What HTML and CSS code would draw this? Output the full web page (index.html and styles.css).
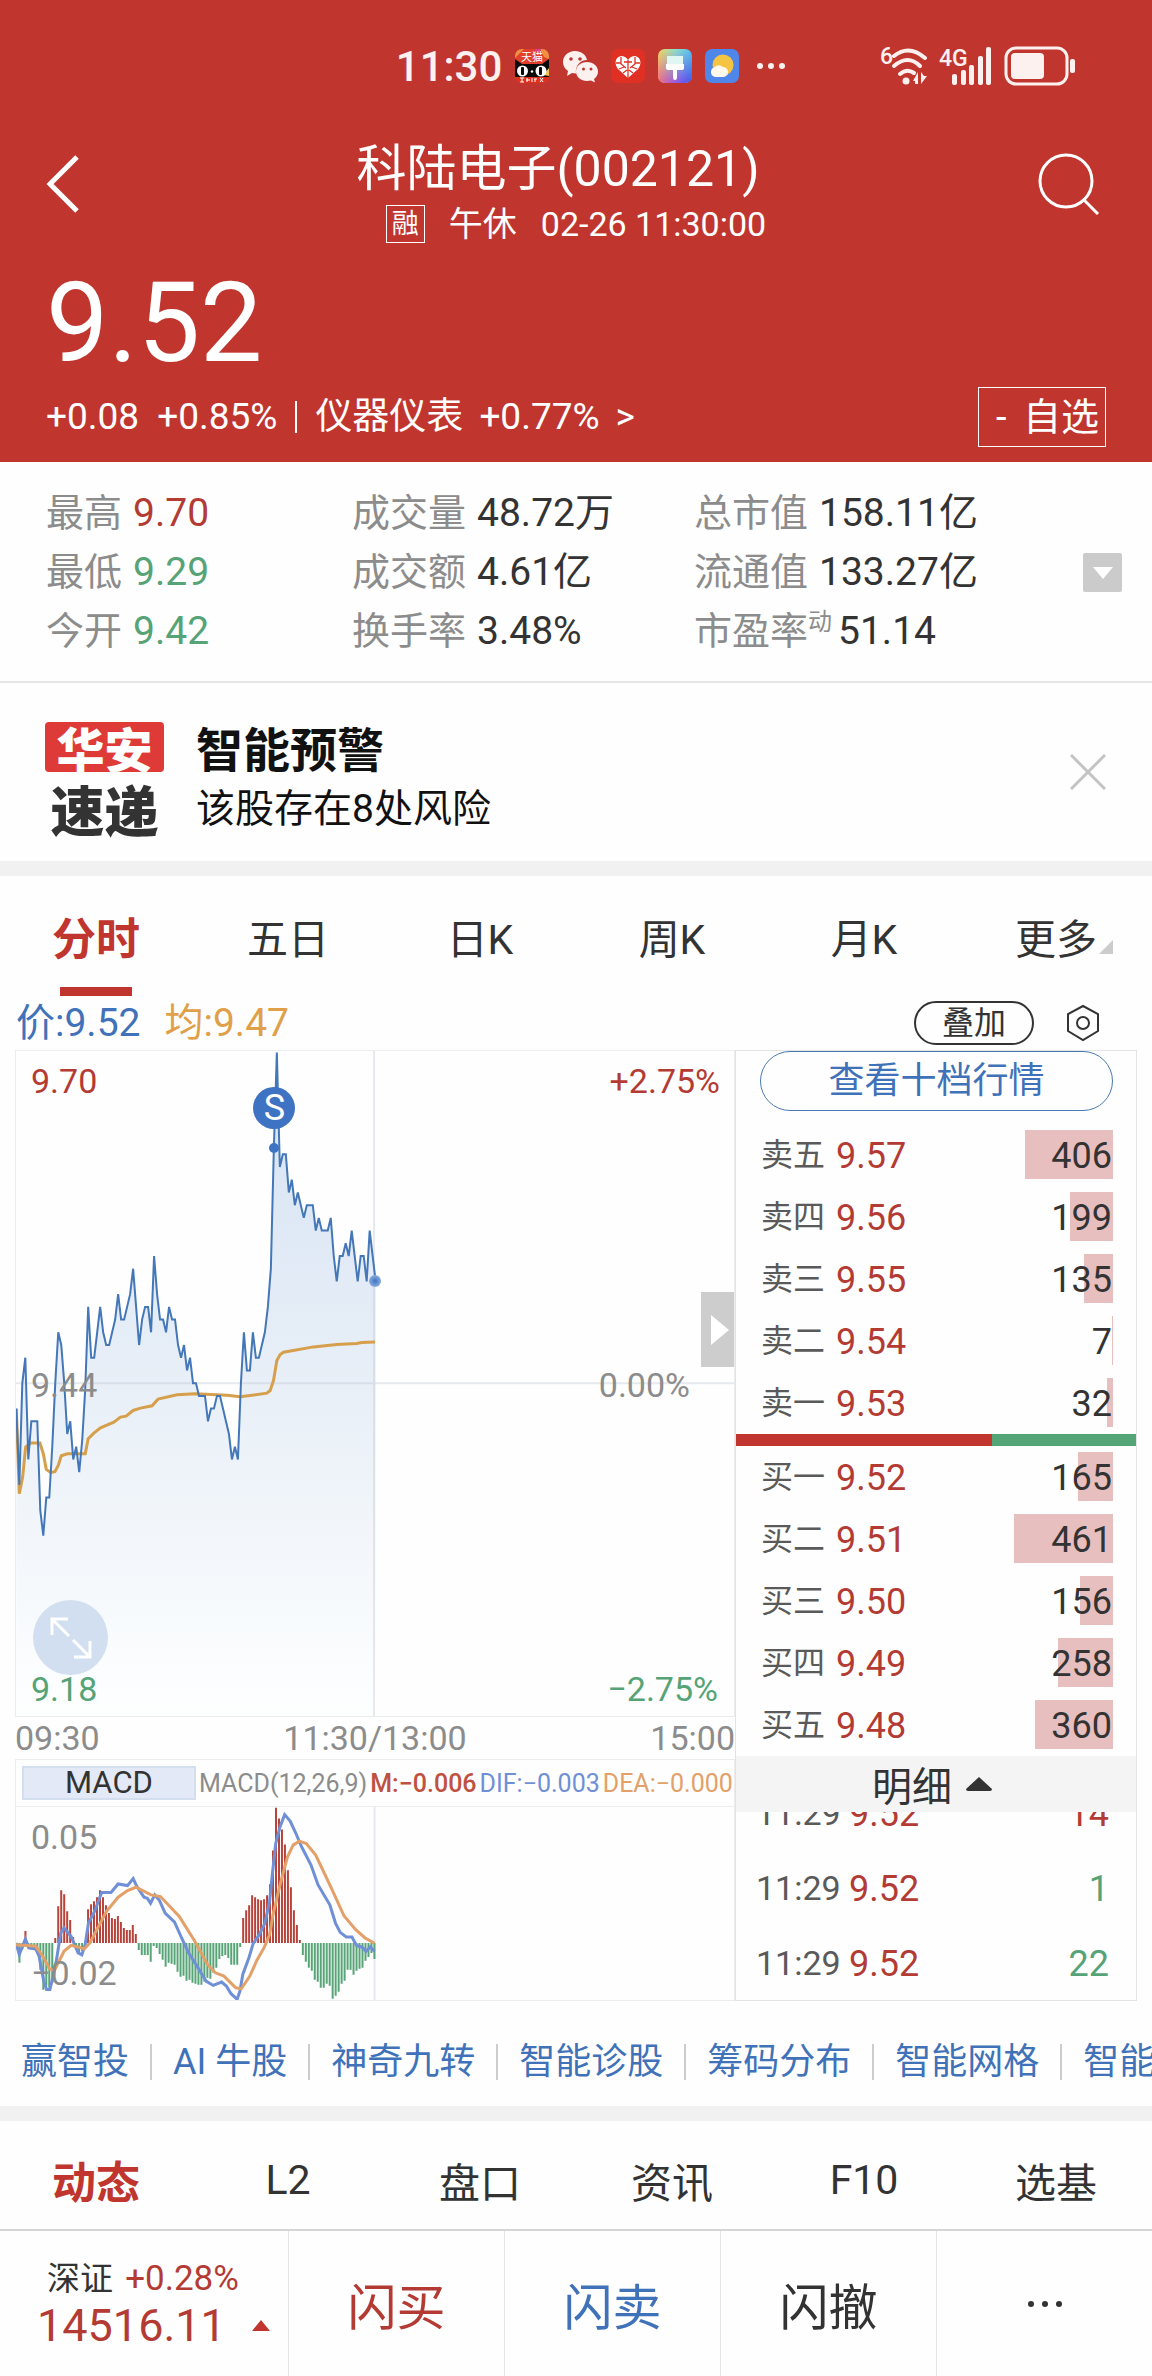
FILE: index.html
```html
<!DOCTYPE html>
<html lang="zh-CN">
<head>
    <meta charset="UTF-8">
    <meta name="viewport" content="width=device-width, initial-scale=1.0">
    <title>科陆电子(002121)</title>
    <link rel="stylesheet" href="styles.css">
</head>
<body>

    <header class="header">
        <div class="status">
            <div class="status-left">
                <span class="clock">11:30</span>
                <svg class="app-icon" viewBox="0 0 34 34">
                    <defs><clipPath id="appClip"><rect width="34" height="34" rx="7"/></clipPath></defs>
                    <g clip-path="url(#appClip)">
                        <rect width="34" height="34" fill="#e2402c"/>
                        <path d="M0 0h9L0 9zM25 0h9v10l-5-2z" fill="#f09040"/>
                        <path d="M20 0h6l-2 5z" fill="#d8409a"/>
                        <path d="M0 10l7 5h20l7-5v18H0z" fill="#0b0b0b"/>
                        <path d="M28 26l6-7v8z" fill="#f3c14c"/>
                        <ellipse cx="7.500" cy="22" rx="5.500" ry="5.500" fill="#fff"/>
                        <ellipse cx="26" cy="22" rx="5.500" ry="5.500" fill="#fff"/>
                        <rect x="6" y="18" width="3" height="8" rx="1" fill="#0b0b0b"/>
                        <rect x="24" y="18" width="3" height="8" rx="1" fill="#0b0b0b"/>
                        <circle cx="17" cy="22.500" r="1.200" fill="#fff"/>
                        <rect y="28" width="34" height="6" fill="#e2301f"/>
                        <path d="M5 29h4M7 29v4M5 33h4M12 29v4M11 31h4M17 29v4M19 30h3M20 30v3M25 29l3 4M28 29l-3 4" stroke="#fff" stroke-width="1"/>
                        <text x="17" y="12" text-anchor="middle" class="app-text">天猫</text>
                    </g>
                </svg>
                <svg class="app-icon wide" viewBox="0 0 36 34">
                    <path d="M13 2C6 2 1 7 1 13c0 4 2 7 5 9l-1 5 5-3 4 .5C13 17 18 11 25 11 24 5.500 19 2 13 2z" fill="#fdf1f0"/>
                    <path d="M25 13c-6 0-11 4-11 9.500S19 32 25 32l4-.5 4 2-1-3.500c2.500-2 4-4.500 4-7.500 0-5.500-5-9.500-11-9.500z" fill="#fdf1f0"/>
                    <g fill="#c0362f"><circle cx="9" cy="10" r="1.800"/><circle cx="18" cy="10" r="1.800"/><circle cx="21.500" cy="20" r="1.500"/><circle cx="29" cy="20" r="1.500"/></g>
                </svg>
                <svg class="app-icon" viewBox="0 0 34 34">
                    <rect width="34" height="34" rx="7" fill="#e03024"/>
                    <path d="M17 29L7 20C3 15 4 8 10 7c3 0 5 1 7 4 2-3 4-4 7-4 6 1 7 8 3 13z" fill="#fff"/>
                    <path d="M17 11v18M10 8v7l5 4M24 8v7l-5 4M5 14h5M29 14h-5M8 20l5-2M26 20l-5-2M12 24l4-3M22 24l-4-3M13 13h8" stroke="#e03024" stroke-width="1.300" fill="none"/>
                </svg>
                <svg class="app-icon" viewBox="0 0 34 34">
                    <defs>
                        <linearGradient id="brushA" x1="0" y1="0" x2="1" y2="0"><stop offset="0" stop-color="#f2d95c"/><stop offset=".5" stop-color="#8fe0c8"/><stop offset="1" stop-color="#55c3f2"/></linearGradient>
                        <linearGradient id="brushB" x1="0" y1="0" x2="1" y2="0"><stop offset="0" stop-color="#f06a8c"/><stop offset=".6" stop-color="#8a55e8"/><stop offset="1" stop-color="#3d55e8"/></linearGradient>
                        <linearGradient id="fade" x1="0" y1="0" x2="0" y2="1"><stop offset="0" stop-color="#fff" stop-opacity="0"/><stop offset="1" stop-color="#fff"/></linearGradient>
                        <mask id="brushMask"><rect width="34" height="34" fill="url(#fade)"/></mask>
                    </defs>
                    <rect width="34" height="34" rx="7" fill="url(#brushA)"/>
                    <rect width="34" height="34" rx="7" fill="url(#brushB)" mask="url(#brushMask)"/>
                    <path d="M9 7h16v8H9z" fill="#dff6f2"/>
                    <path d="M8 15h18v4q0 2-3 2h-4v7q0 3-2 3t-2-3v-7h-4q-3 0-3-2z" fill="#fff"/>
                </svg>
                <svg class="app-icon" viewBox="0 0 34 34">
                    <rect width="34" height="34" rx="7" fill="#4f86ea"/>
                    <circle cx="18" cy="16" r="10.500" fill="#f5c443"/>
                    <path d="M10 28a5 5 0 0 1-1-9.500 6 6 0 0 1 9-.5 5 5 0 0 1 3 9q-1 1-3 1z" fill="#fff8ec"/>
                </svg>
                <svg class="dots" viewBox="0 0 30 8"><g fill="#fdf1f0"><circle cx="4" cy="4" r="3"/><circle cx="15" cy="4" r="3"/><circle cx="26" cy="4" r="3"/></g></svg>
            </div>
            <div class="status-right">
                <svg class="wifi" viewBox="0 0 48 38">
                    <text x="0" y="17" class="net-text">6</text>
                    <g fill="none" stroke="#fdf1f0" stroke-width="4" stroke-linecap="round">
                        <path d="M14 9Q29-3 45 11"/>
                        <path d="M14 19Q28 7 40 19"/>
                        <path d="M20 27Q27 21 34 26"/>
                    </g>
                    <circle cx="26" cy="34" r="3.500" fill="#fdf1f0"/>
                    <path d="M33 34l5-9v12h-3v-3zM41 25v12l6-8h-3z" fill="#fdf1f0"/>
                </svg>
                <svg class="signal" viewBox="0 0 54 38">
                    <text x="0" y="19" class="net-text">4G</text>
                    <g fill="#fdf1f0"><rect x="13" y="27" width="5" height="11" rx="2"/><rect x="22" y="23" width="5" height="15" rx="2"/><rect x="30" y="18" width="5" height="20" rx="2"/><rect x="39" y="9" width="5" height="29" rx="2"/><rect x="47" y="0" width="5" height="38" rx="2"/></g>
                </svg>
                <svg class="battery" viewBox="0 0 72 40">
                    <rect x="2" y="2" width="61" height="36" rx="10" fill="none" stroke="#fdf1f0" stroke-width="3"/>
                    <rect x="7" y="7" width="33" height="26" rx="4" fill="#fdf1f0"/>
                    <rect x="66" y="13" width="5" height="14" rx="2" fill="#fdf1f0"/>
                </svg>
            </div>
        </div>

        <div class="title-bar">
            <button class="icon-btn" aria-label="返回">
                <svg width="34" height="58" viewBox="0 0 34 58"><path d="M31 2L4 29l27 27" fill="none" stroke="#fff" stroke-width="5"/></svg>
            </button>
            <div class="title">
                <h1>科陆电子(002121)</h1>
                <p><span class="margin-tag">融</span><span>午休</span><span>02-26 11:30:00</span></p>
            </div>
            <button class="icon-btn" aria-label="搜索">
                <svg width="62" height="62" viewBox="0 0 62 62"><circle cx="28" cy="28" r="26" fill="none" stroke="#fff" stroke-width="3"/><path d="M46 47l14 14" stroke="#fff" stroke-width="3"/></svg>
            </button>
        </div>

        <div class="price">9.52</div>
        <div class="change">
            <span>+0.08</span><span>+0.85%</span><i class="bar"></i>
            <a href="#">仪器仪表<span>+0.77%</span><span>&gt;</span></a>
            <button class="watch-btn"><span>-</span><span>自选</span></button>
        </div>
    </header>

    <section class="stats">
        <dl>
            <div><dt>最高</dt><dd class="up">9.70</dd></div>
            <div><dt>成交量</dt><dd>48.72万</dd></div>
            <div><dt>总市值</dt><dd>158.11亿</dd></div>
            <div><dt>最低</dt><dd class="down">9.29</dd></div>
            <div><dt>成交额</dt><dd>4.61亿</dd></div>
            <div><dt>流通值</dt><dd>133.27亿</dd></div>
            <div><dt>今开</dt><dd class="down">9.42</dd></div>
            <div><dt>换手率</dt><dd>3.48%</dd></div>
            <div class="pe"><dt>市盈率<sup>动</sup></dt><dd>51.14</dd></div>
        </dl>
        <button class="expand" aria-label="展开"><svg width="20" height="12" viewBox="0 0 20 12"><path d="M0 0h20L10 12z" fill="#fff"/></svg></button>
    </section>

    <section class="alert">
        <div class="logo"><span>华安</span><b>速递</b></div>
        <div class="alert-text">
            <h2>智能预警</h2>
            <p>该股存在8处风险</p>
        </div>
        <button class="close" aria-label="关闭"><svg width="36" height="36" viewBox="0 0 36 36"><path d="M1 1l34 34M35 1L1 35" stroke="#c4c4c4" stroke-width="3"/></svg></button>
    </section>

    <nav class="tabs period">
        <button class="active">分时</button>
        <button>五日</button>
        <button>日K</button>
        <button>周K</button>
        <button>月K</button>
        <button>更多<i class="corner"></i></button>
    </nav>

    <div class="legend">
        <span class="blue">价:9.52</span>
        <span class="orange">均:9.47</span>
        <button class="overlay-btn">叠加</button>
        <button class="icon-btn" aria-label="设置">
            <svg width="34" height="38" viewBox="0 0 34 38"><path d="M17 2l15 8v17l-15 9-15-9V10z" fill="none" stroke="#333" stroke-width="2"/><circle cx="17" cy="19" r="6" fill="none" stroke="#333" stroke-width="2"/></svg>
        </button>
    </div>

    <main class="market">
        <div class="charts">
            <div class="chart price-chart">
                <svg class="plot" viewBox="46 30 2158 1998" preserveAspectRatio="none">
                    <defs>
                        <linearGradient id="area" gradientUnits="userSpaceOnUse" x1="0" y1="30" x2="0" y2="2028">
                            <stop offset="0" stop-color="#d6e3f4"/>
                            <stop offset=".5" stop-color="#e8eff7"/>
                            <stop offset="1" stop-color="#feffff"/>
                        </linearGradient>
                    </defs>
                    <path id="priceArea" fill="url(#area)"/>
                    <path d="M46 1028H2204M1122 30V2028" class="gridline"/>
                    <polyline class="avg-line" points="47,1105 56,1360 66,1310 75,1220 90,1208 118,1208 128,1240 137,1287 150,1296 163,1294 173,1275 182,1246 200,1240 254,1240 263,1195 280,1178 300,1162 340,1145 360,1130 377,1127 398,1110 420,1103 455,1096 473,1076 530,1063 585,1060 680,1064 720,1069 800,1058 810,1050 820,1020 830,960 840,942 850,935 940,919 1010,912 1070,909 1085,906 1125,904"/>
                    <path id="priceLine" class="price-line"/>
                </svg>
                <span class="label top-left up">9.70</span>
                <span class="label top-right up">+2.75%</span>
                <span class="label mid-left">9.44</span>
                <span class="label mid-right">0.00%</span>
                <span class="label bottom-left down">9.18</span>
                <span class="label bottom-right down">−2.75%</span>
                <span class="sell-mark">S</span>
                <i class="sell-dot"></i>
                <i class="last-dot"></i>
                <button class="fullscreen" aria-label="全屏"><svg width="42" height="42" viewBox="0 0 42 42"><path d="M2 18V2h16M3 3l16 16M40 24v16H24M39 39L23 23" fill="none" stroke="#fff" stroke-width="3"/></svg></button>
                <button class="fold" aria-label="收起"><svg width="18" height="30" viewBox="0 0 18 30"><path d="M0 0l18 15L0 30z" fill="#fff"/></svg></button>
            </div>
            <div class="times"><span>09:30</span><span>11:30/13:00</span><span>15:00</span></div>
            <div class="macd-head">
                <button>MACD</button>
                <span>MACD(12,26,9)</span><span class="m">M:−0.006</span><span class="dif">DIF:−0.003</span><span class="dea">DEA:−0.000</span>
            </div>
            <div class="chart macd-chart">
                <svg class="plot" viewBox="33 800 1526 582" preserveAspectRatio="none">
                    <path d="M795 800V1382" class="gridline"/>
                    <path id="barsUp" class="bars-up"/>
                    <path id="barsDown" class="bars-down"/>
                    <polyline class="dif-line" points="33,1210 40,1245 53,1198 60,1225 75,1228 82,1250 92,1325 98,1350 105,1350 112,1310 118,1270 128,1180 135,1165 150,1190 165,1240 173,1246 180,1215 187,1150 200,1115 215,1058 235,1058 250,1032 270,1037 282,1016 290,1040 305,1072 312,1075 319,1090 328,1065 338,1082 350,1120 370,1147 385,1195 400,1240 420,1285 437,1325 452,1338 470,1328 480,1340 490,1363 503,1380 509,1355 515,1305 528,1255 537,1212 550,1185 562,1150 572,1085 578,1000 585,910 594,860 604,823 616,843 628,880 640,920 660,975 675,1035 700,1095 712,1150 722,1178 735,1192 747,1192 757,1218 768,1222 777,1235 786,1222 795,1235"/>
                    <polyline class="dea-line" points="33,1215 75,1220 90,1250 105,1290 115,1292 135,1235 150,1217 165,1222 178,1228 190,1210 225,1115 250,1072 270,1052 288,1042 320,1065 340,1070 380,1130 413,1205 440,1275 457,1300 475,1310 500,1345 512,1348 530,1310 545,1262 560,1225 572,1185 580,1120 595,1030 610,950 622,915 635,903 650,910 670,945 705,1050 730,1128 755,1170 775,1195 795,1211"/>
                </svg>
                <span class="label top-left">0.05</span>
                <span class="label bottom-left">−0.02</span>
            </div>
        </div>

        <div class="book">
            <button class="depth-btn">查看十档行情</button>
            <table class="orders">
                <tr><th>卖五</th><td>9.57</td><td class="vol"><i style="width: 88px"></i><span>406</span></td></tr>
                <tr><th>卖四</th><td>9.56</td><td class="vol"><i style="width: 43px"></i><span>199</span></td></tr>
                <tr><th>卖三</th><td>9.55</td><td class="vol"><i style="width: 29px"></i><span>135</span></td></tr>
                <tr><th>卖二</th><td>9.54</td><td class="vol"><i style="width: 1px"></i><span>7</span></td></tr>
                <tr><th>卖一</th><td>9.53</td><td class="vol"><i style="width: 6px"></i><span>32</span></td></tr>
            </table>
            <div class="ratio"><i style="width: 64%"></i></div>
            <table class="orders">
                <tr><th>买一</th><td>9.52</td><td class="vol"><i style="width: 35px"></i><span>165</span></td></tr>
                <tr><th>买二</th><td>9.51</td><td class="vol"><i style="width: 99px"></i><span>461</span></td></tr>
                <tr><th>买三</th><td>9.50</td><td class="vol"><i style="width: 33px"></i><span>156</span></td></tr>
                <tr><th>买四</th><td>9.49</td><td class="vol"><i style="width: 55px"></i><span>258</span></td></tr>
                <tr><th>买五</th><td>9.48</td><td class="vol"><i style="width: 78px"></i><span>360</span></td></tr>
            </table>
            <button class="detail-btn">明细<svg width="26" height="14" viewBox="0 0 26 14"><path d="M13 0l13 12q0 2-2 2H2q-2 0-2-2z" fill="#333"/></svg></button>
            <div class="ticks">
                <table>
                    <tr><th>11:29</th><td>9.52</td><td class="up">14</td></tr>
                    <tr><th>11:29</th><td>9.52</td><td class="down">1</td></tr>
                    <tr><th>11:29</th><td>9.52</td><td class="down">22</td></tr>
                </table>
            </div>
        </div>
    </main>

    <nav class="tools">
        <a href="#">赢智投</a>
        <a href="#">AI 牛股</a>
        <a href="#">神奇九转</a>
        <a href="#">智能诊股</a>
        <a href="#">筹码分布</a>
        <a href="#">智能网格</a>
        <a href="#">智能条件</a>
    </nav>

    <nav class="tabs info">
        <button class="active">动态</button>
        <button>L2</button>
        <button>盘口</button>
        <button>资讯</button>
        <button>F10</button>
        <button>选基</button>
    </nav>

    <footer class="footer">
        <a href="#" class="index">
            <span class="index-name">深证 <em>+0.28%</em></span>
            <span class="index-value">14516.11<svg width="18" height="11" viewBox="0 0 18 11"><path d="M9 0l9 11H0z" fill="#c0362f"/></svg></span>
        </a>
        <button class="up">闪买</button>
        <button class="blue">闪卖</button>
        <button>闪撤</button>
        <button aria-label="更多"><svg width="36" height="8" viewBox="0 0 36 8"><g fill="#333"><circle cx="4" cy="4" r="3"/><circle cx="18" cy="4" r="3"/><circle cx="32" cy="4" r="3"/></g></svg></button>
    </footer>

    <script src="chart.js"></script>
</body>
</html>
```
FILE: styles.css
```css
* {
    box-sizing: border-box;
}

body {
    margin: 0;
    background-color: #fefefe;
    color: #333;
    font-family: Roboto, "Noto Sans CJK SC", sans-serif;
    overflow-x: hidden;
}

h1, h2, p, dl, dd {
    margin: 0;
    font-weight: 400;
}

button {
    padding: 0;
    border: none;
    background: none;
    color: inherit;
    font: inherit;
    cursor: pointer;
}

a {
    color: inherit;
    text-decoration: none;
}

svg {
    display: block;
}

.up {
    color: #b33b34;
}

.down {
    color: #55a376;
}

.blue {
    color: #3f72b8;
}

.orange {
    color: #e0a04a;
}

/* header */
.header {
    padding: 40px 46px 15px;
    background-color: #c0362f;
    color: #fff;
}

.status {
    display: flex;
    justify-content: space-between;
    align-items: center;
    height: 52px;
    padding-left: 33%;
    padding-right: 30px;
    color: #fdf1f0;
}

.status-left, .status-right {
    display: flex;
    align-items: center;
    gap: 13px;
}

.status-right {
    gap: 11px;
}

.clock {
    font-size: 42px;
    font-weight: 500;
}

.app-icon {
    width: 34px;
    height: 34px;
}

.app-icon.wide {
    width: 36px;
}

.app-text {
    font-size: 11px;
    fill: #fff;
}

.dots {
    width: 30px;
    margin-left: 4px;
}

.net-text {
    font-size: 23px;
    font-weight: 500;
    fill: #fdf1f0;
}

.wifi {
    width: 48px;
}

.signal {
    width: 54px;
    overflow: visible;
}

.battery {
    width: 72px;
}

.title-bar {
    display: flex;
    justify-content: space-between;
    align-items: flex-start;
    margin-top: 47px;
}

.icon-btn {
    display: flex;
    align-items: center;
    height: 90px;
}

.title-bar .icon-btn {
    width: 68px;
}

.title {
    text-align: center;
}

.title h1 {
    padding-right: 36px;
    font-size: 50px;
    line-height: 60px;
}

.title p {
    display: flex;
    justify-content: center;
    align-items: center;
    gap: 24px;
    font-size: 34px;
    line-height: 50px;
}

.margin-tag {
    padding: 0 5px;
    border: 1px solid #fff;
    font-size: 27px;
    line-height: 36px;
}

.price {
    margin-top: 14px;
    font-size: 111px;
    line-height: 120px;
}

.change {
    display: flex;
    align-items: center;
    gap: 18px;
    margin-top: 4px;
    font-size: 37px;
    line-height: 58px;
}

.change a {
    display: flex;
    gap: 16px;
}

.bar {
    width: 2px;
    height: 32px;
    background-color: #fff;
}

.watch-btn {
    display: flex;
    justify-content: space-between;
    width: 128px;
    margin-left: auto;
    padding: 0 6px 0 17px;
    border: 1px solid #fff;
    font-size: 38px;
}

/* key figures */
.stats {
    display: flex;
    align-items: center;
    padding: 22px 30px 20px 46px;
    border-bottom: 2px solid #e6e6e6;
}

.stats dl {
    flex: 1;
    display: grid;
    grid-template-columns: 306fr 342fr 389fr;
    font-size: 38px;
    line-height: 59px;
}

.stats dl div {
    display: flex;
    gap: 11px;
}

.stats dt {
    color: #8c8c8c;
}

.stats dd {
    font-size: 39px;
}

.stats .pe {
    gap: 6px;
}

.stats sup {
    font-size: 24px;
    line-height: 24px;
}

.expand {
    display: flex;
    align-items: center;
    justify-content: center;
    width: 39px;
    height: 39px;
    border-radius: 2px;
    background-color: #cbcbcb;
}

/* risk alert */
.alert {
    display: flex;
    align-items: center;
    gap: 32px;
    height: 178px;
    padding: 0 46px 0 45px;
    color: #111;
}

.logo {
    display: flex;
    flex-direction: column;
    align-items: center;
    gap: 10px;
    width: 119px;
    margin-top: 14px;
    font-family: "Noto Sans CJK SC", sans-serif;
    font-size: 54px;
    font-weight: 900;
    line-height: 54px;
}

.logo span {
    width: 119px;
    border-radius: 4px;
    background-color: #de3a38;
    color: #fff;
    font-size: 48px;
    line-height: 50px;
    text-align: center;
}

.logo b {
    color: #333;
    font-weight: 900;
}

.alert-text {
    flex: 1;
    margin-top: 16px;
    font-size: 39px;
    line-height: 58px;
}

.alert-text h2 {
    font-size: 47px;
    font-weight: 700;
}

/* tabs */
.tabs {
    display: grid;
    grid-template-columns: repeat(6, 1fr);
    border-top: 15px solid #f1f1f1;
    font-size: 41px;
}

.tabs button {
    position: relative;
    height: 120px;
}

.tabs .active {
    color: #c0362f;
    font-size: 44px;
    font-weight: 700;
}

.period .active::after {
    content: "";
    position: absolute;
    left: 60px;
    right: 60px;
    bottom: 0;
    height: 9px;
    background-color: #c0362f;
}

.corner {
    position: absolute;
    right: 39px;
    bottom: 42px;
    border-left: 14px solid transparent;
    border-bottom: 14px solid #ccc;
}

.info {
    border-bottom: 2px solid #d5d5d5;
}

.info button {
    height: 108px;
    padding-top: 10px;
}

.legend {
    display: flex;
    align-items: center;
    gap: 24px;
    height: 54px;
    padding: 0 52px 0 16px;
    font-size: 39px;
    line-height: 50px;
}

.legend .icon-btn {
    height: 38px;
    margin-left: 8px;
}

.overlay-btn {
    width: 120px;
    height: 44px;
    margin-left: auto;
    border: 2px solid #333;
    border-radius: 22px;
    font-size: 32px;
    line-height: 40px;
}

/* charts */
.market {
    display: grid;
    grid-template-columns: 720fr 402fr;
    margin: 0 15px;
}

.charts {
    color: #8c8c8c;
    font-size: 34px;
}

.chart {
    position: relative;
    border: 1px solid #ececec;
}

.price-chart {
    height: 667px;
}

.macd-chart {
    height: 195px;
    overflow: hidden;
}

.plot {
    width: 100%;
    height: 100%;
}

.plot * {
    vector-effect: non-scaling-stroke;
}

.gridline {
    fill: none;
    stroke: #bbc4cf;
    stroke-opacity: .35;
    stroke-width: 2px;
}

.price-line {
    fill: none;
    stroke: #4377b8;
    stroke-width: 2px;
}

.avg-line {
    fill: none;
    stroke: #d69f4c;
    stroke-width: 3px;
}

.dif-line {
    fill: none;
    stroke: #6f8fd6;
    stroke-width: 3px;
}

.dea-line {
    fill: none;
    stroke: #e3a068;
    stroke-width: 3px;
}

.bars-up {
    stroke: #b8433b;
    stroke-width: 2px;
}

.bars-down {
    stroke: #57a477;
    stroke-width: 2px;
}

.label {
    position: absolute;
    line-height: 40px;
}

.top-left {
    top: 10px;
    left: 15px;
}

.top-right {
    top: 10px;
    right: 14px;
}

.mid-left {
    top: 314px;
    left: 15px;
}

.mid-right {
    top: 314px;
    right: 44px;
}

.bottom-left {
    bottom: 7px;
    left: 15px;
}

.bottom-right {
    bottom: 7px;
    right: 16px;
}

.sell-mark, .sell-dot, .last-dot {
    position: absolute;
    border-radius: 50%;
    background-color: #3d73c2;
    transform: translate(-50%, -50%);
}

.sell-mark {
    top: 57px;
    left: 36%;
    width: 42px;
    height: 42px;
    color: #fff;
    font-size: 36px;
    line-height: 42px;
    text-align: center;
}

.sell-dot {
    top: 97px;
    left: 36%;
    width: 10px;
    height: 10px;
}

.last-dot {
    top: 230px;
    left: 50%;
    width: 12px;
    height: 12px;
    background: radial-gradient(#3d73c2, #a9c4ea);
}

.fullscreen {
    position: absolute;
    left: 17px;
    bottom: 41px;
    display: flex;
    align-items: center;
    justify-content: center;
    width: 75px;
    height: 75px;
    border-radius: 50%;
    background-color: #d2dff0;
}

.fold {
    position: absolute;
    top: 241px;
    right: 0;
    width: 33px;
    height: 75px;
    padding-left: 10px;
    background-color: #cdcdcd;
}

.times {
    display: flex;
    justify-content: space-between;
    line-height: 42px;
}

.macd-head {
    display: flex;
    align-items: center;
    gap: 3px;
    height: 47px;
    padding-left: 6px;
    border: 1px solid #ececec;
    border-bottom: none;
    font-size: 25px;
    white-space: nowrap;
}

.macd-head button {
    width: 174px;
    height: 34px;
    border: 2px solid #d3deef;
    background-color: #e3e9f6;
    color: #333;
    font-size: 31px;
    line-height: 30px;
}

.m {
    color: #bf5140;
    font-weight: 500;
}

.dif {
    color: #6f8fd6;
}

.dea {
    color: #e3a068;
}

/* order book */
.book {
    display: flex;
    flex-direction: column;
    border: 1px solid #e3e3e3;
}

.depth-btn {
    height: 60px;
    margin: 0 23px 13px 24px;
    border: 1px solid #4a78b4;
    border-radius: 30px;
    color: #3f72b8;
    font-size: 36px;
    line-height: 58px;
}

.book table {
    border-collapse: collapse;
    color: #b33b34;
    font-size: 36px;
    line-height: 42px;
}

.orders {
    margin: 0 23px 0 25px;
}

.book th {
    width: 75px;
    padding: 0;
    color: #5a5a5a;
    font-size: 32px;
    font-weight: 400;
    text-align: left;
}

.book td {
    height: 62px;
    padding: 2px 0 0;
}

.book .vol {
    position: relative;
    padding-right: 1px;
    color: #333;
    text-align: right;
}

.vol i {
    position: absolute;
    top: 6px;
    right: 0;
    height: 49px;
    background-color: #e7bfbf;
}

.vol span {
    position: relative;
}

.ratio {
    height: 12px;
    background-color: #55a677;
}

.ratio i {
    display: block;
    height: 100%;
    background-color: #c0362f;
}

.detail-btn {
    display: flex;
    align-items: center;
    justify-content: center;
    gap: 14px;
    height: 56px;
    padding-right: 8px;
    background-color: #f4f4f4;
    font-size: 40px;
}

.ticks {
    display: flex;
    align-items: flex-end;
    height: 188px;
    padding: 0 27px 0 20px;
    overflow: hidden;
}

.ticks table {
    width: 100%;
}

.ticks th {
    width: 93px;
    font-size: 34px;
}

.ticks td {
    height: 75px;
}

.ticks td:last-child {
    text-align: right;
}

/* shortcuts */
.tools {
    display: flex;
    align-items: center;
    height: 105px;
    padding-top: 17px;
    overflow: hidden;
    color: #3f72b8;
    font-size: 36px;
    line-height: 36px;
    white-space: nowrap;
}

.tools a {
    padding: 0 21px;
    border-right: 2px solid #ccc;
}

/* trade bar */
.footer {
    display: grid;
    grid-template-columns: 4fr 3fr 3fr 3fr 3fr;
    height: 145px;
    font-size: 49px;
}

.footer button {
    display: flex;
    align-items: center;
    justify-content: center;
    border-left: 1px solid #e3e3e3;
}

.index {
    display: flex;
    flex-direction: column;
    justify-content: center;
    padding-left: 37px;
}

.index-name {
    padding-left: 10px;
    font-size: 33px;
    line-height: 44px;
}

.index-name em {
    margin-left: 4px;
    color: #b33b34;
    font-size: 35px;
    font-style: normal;
}

.index-value {
    display: flex;
    align-items: center;
    gap: 26px;
    color: #b33b34;
    font-size: 45px;
    line-height: 50px;
}
```
FILE: chart.js
```javascript
// price per minute, in cents away from yesterday's close 9.44
const prices = [
    -2, -8, 0, 2, -6, -3, -3, -3, -10, -12, -9, -9, -5, 0, 4, 3, 0, -4, -3, -6,
    -5, -7, -4.5, -0.5, 6, 2, 2, 4, 6, 4, 3, 3, 4, 5, 7, 5, 5, 6, 7, 9,
    6, 3, 5, 6, 6, 4, 10, 7, 5, 5, 4, 6, 5, 5, 3, 2, 3, 1, 2, 0,
    0, -1, -1, -1, -3, -2, -2, -1, -1, -2, -3, -4, -6, -5, -6, 0, 4, 1, 1, 4,
    2, 2, 3, 4, 6, 9, 18.5, 26, 17, 18, 18, 15, 16, 14, 15, 14, 13, 14, 14, 14,
    12, 13, 12, 12, 12, 13, 10, 8, 10, 10, 11, 10, 12, 10, 8, 10, 10, 8, 12, 10, 8
];

// MACD histogram, one bar per minute
const bars = [
    -2, -20, -6, 12, -4, -4, -5, -9, -27, -47, -43, -45, -40, 5, 37, 53, 49, 32, 23, 6,
    -5, -10, -8, -3, 34, 39, 42, 46, 53, 46, 38, 30, 25, 24, 27, 21, 15, 13, 13, 18,
    9, -7, -12, -12, -12, -19, -3, -5, -11, -17, -24, -20, -21, -22, -29, -34, -33, -38, -37, -40,
    -41, -42, -42, -39, -35, -36, -30, -25, -16, -13, -12, -15, -22, -22, -22, -4, 25, 33, 38, 48,
    46, 44, 43, 44, 48, 59, 93, 136, 125, 114, 99, 73, 56, 33, 18, 3, -12, -19, -25, -28,
    -37, -39, -45, -45, -41, -43, -56, -53, -49, -41, -38, -27, -27, -32, -28, -26, -25, -18, -14, -10, -16
];

const line = prices.map((p, i) => (47 + i * 9) + ',' + (1028 - p * 38.2)).join('L');
document.getElementById('priceLine').setAttribute('d', 'M' + line);
document.getElementById('priceArea').setAttribute('d', 'M' + line + 'V2028H47Z');

let up = '';
let down = '';
bars.forEach((b, i) => {
    const seg = 'M' + (34 + i * 6.34) + ' 1210V' + (1210 - b * 3);
    if (b > 0) {
        up += seg;
    } else {
        down += seg;
    }
});
document.getElementById('barsUp').setAttribute('d', up);
document.getElementById('barsDown').setAttribute('d', down);
```
